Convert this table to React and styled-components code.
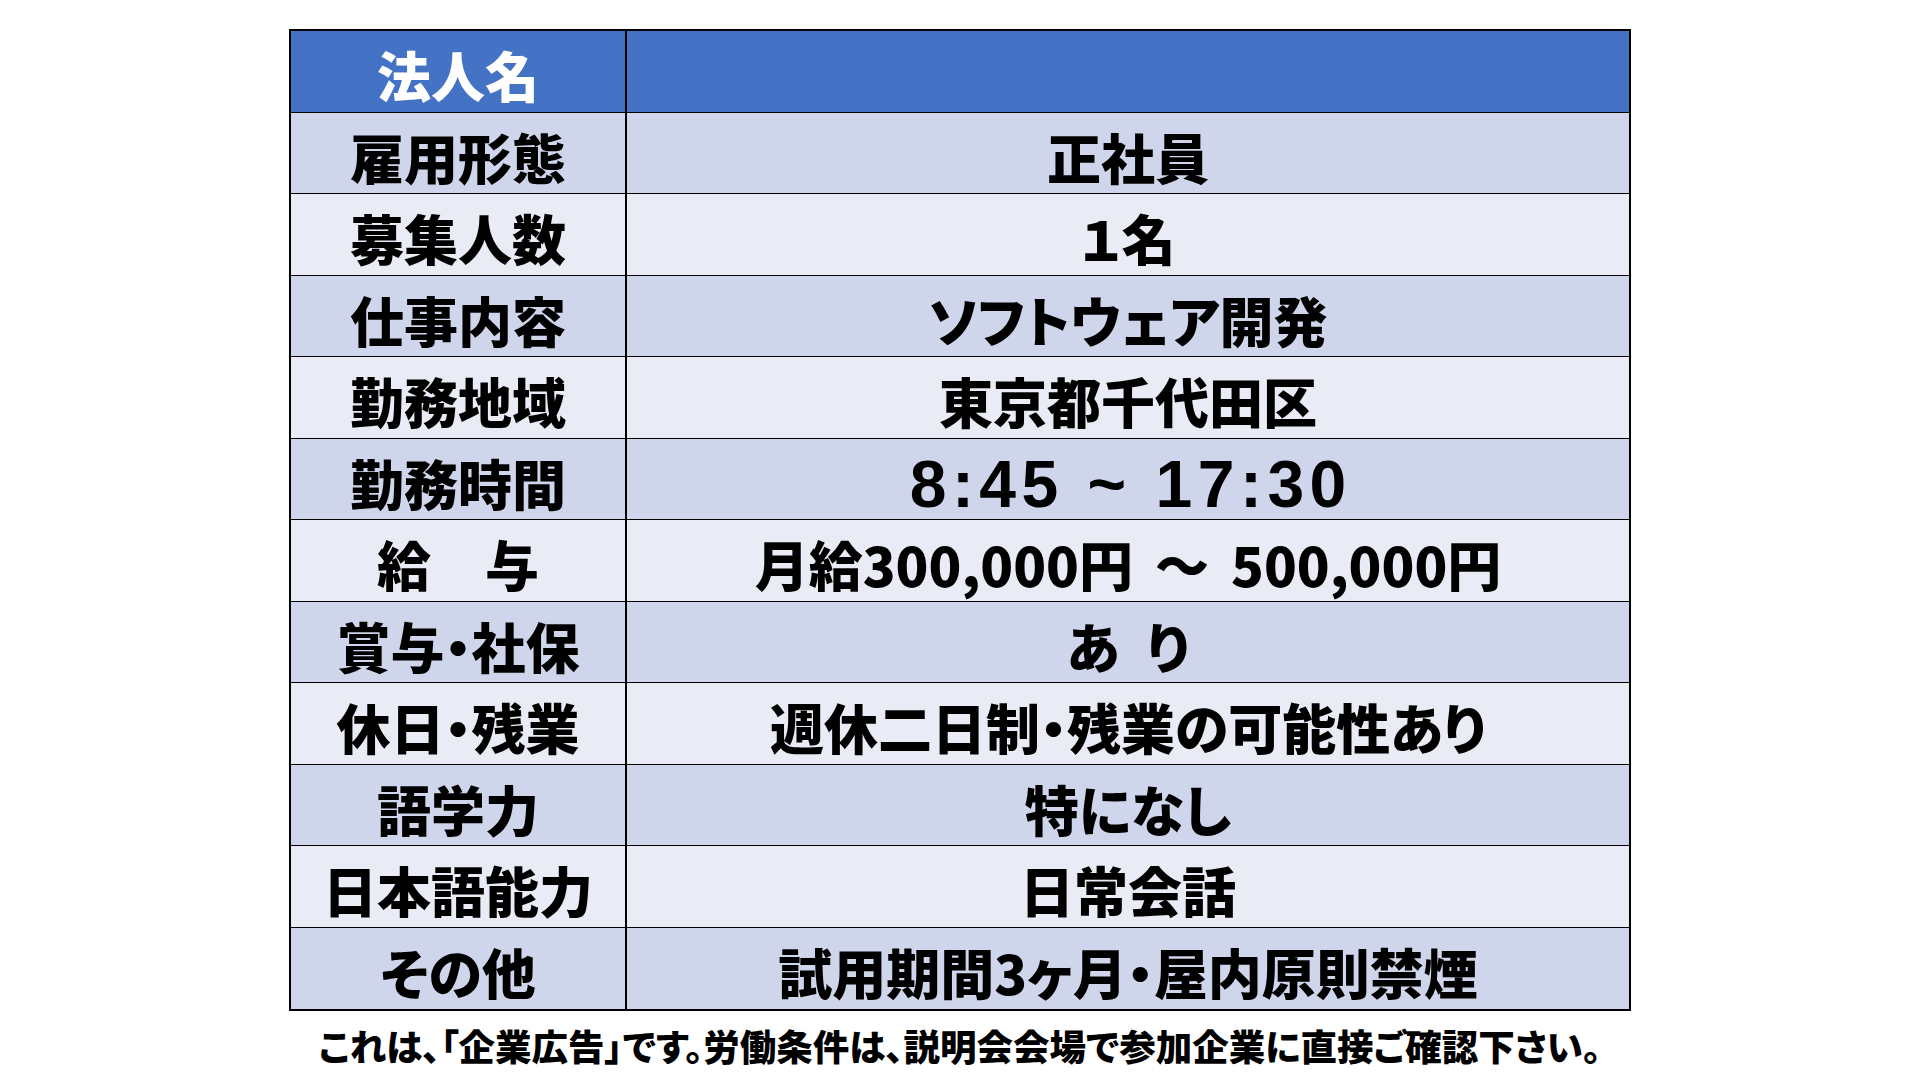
import React from "react"
import styled, { createGlobalStyle } from "styled-components"

const GlobalStyle = createGlobalStyle`
  html, body {
    margin: 0;
    padding: 0;
    background: #ffffff;
  }
  body {
    font-family: "Noto Sans CJK JP", "Noto Sans", sans-serif;
  }
`

const Page = styled.div`
  width: 1920px;
  height: 1080px;
  display: flex;
  flex-direction: column;
  align-items: center;
  padding-top: 29px;
  box-sizing: border-box;
`

const Table = styled.div`
  width: 1342px;
  border: 2px solid #000;
  box-sizing: border-box;
  display: flex;
  flex-direction: column;
`

const Row = styled.div`
  display: grid;
  grid-template-columns: 336px 1fr;
  height: 81.5px;
  box-sizing: border-box;
  border-bottom: ${(p) => (p.$last ? "none" : "1.5px solid #000")};
  background: ${(p) => (p.$head ? "#4472C4" : p.$dark ? "#CFD5EA" : "#E9EBF5")};
`

const Cell = styled.div`
  display: flex;
  align-items: center;
  justify-content: center;
  padding-top: 8px;
  box-sizing: border-box;
  font-family: "Noto Sans CJK JP", "Noto Sans", sans-serif;
  font-weight: 900;
  font-size: 54px;
  line-height: 1;
  font-feature-settings: "palt";
  color: ${(p) => (p.$head ? "#ffffff" : "#000000")};
  white-space: nowrap;
`

const Label = styled(Cell)`
  border-right: 2px solid #000;
`

const Digits = styled.span`
  font-family: "Liberation Sans", Arial, sans-serif;
  font-weight: 700;
  font-size: 66px;
  letter-spacing: 5.5px;
  padding-top: 2px;
  padding-left: 5.5px;
`

const Wave = styled.span`
  margin: 0 ${(p) => p.$gap || 22}px;
`

const Note = styled.p`
  margin: 17px 0 0;
  font-family: "Noto Sans CJK JP", "Noto Sans", sans-serif;
  font-weight: 900;
  font-size: 36.5px;
  line-height: 1;
  font-feature-settings: "palt";
  color: #000;
  white-space: nowrap;
`

const rows = [
  ["雇用形態", "正社員"],
  ["募集人数", "１名"],
  ["仕事内容", "ソフトウェア開発"],
  ["勤務地域", "東京都千代田区"],
  ["勤務時間", <Digits>8:45 ~ 17:30</Digits>],
  ["給　与", <>月給300,000円<Wave>～</Wave>500,000円</>],
  ["賞与・社保", "あ\u2002り"],
  ["休日・残業", "週休二日制・残業の可能性あり"],
  ["語学力", "特になし"],
  ["日本語能力", "日常会話"],
  ["その他", "試用期間3ヶ月・屋内原則禁煙"],
]

export default function App() {
  return (
    <Page>
      <GlobalStyle />
      <Table>
        <Row $head>
          <Label $head>法人名</Label>
          <Cell $head />
        </Row>
        {rows.map(([label, value], i) => (
          <Row key={i} $dark={i % 2 === 0} $last={i === rows.length - 1}>
            <Label>{label}</Label>
            <Cell>{value}</Cell>
          </Row>
        ))}
      </Table>
      <Note>これは、「企業広告」です。労働条件は、説明会会場で参加企業に直接ご確認下さい。</Note>
    </Page>
  )
}
